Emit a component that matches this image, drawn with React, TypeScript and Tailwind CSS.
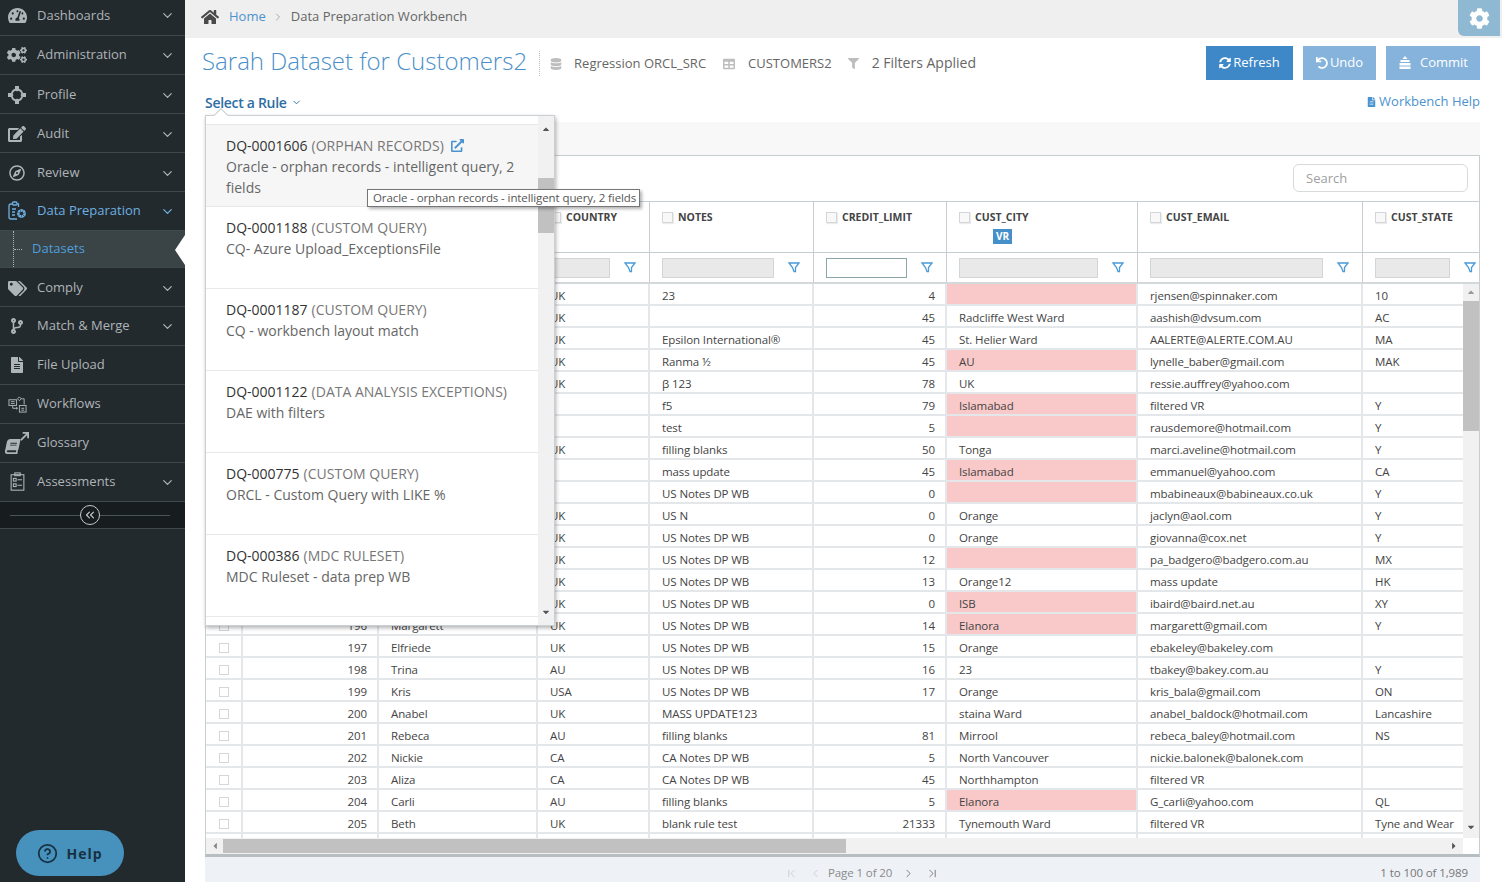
import React from "react";
import { ChevronDown, ChevronRight, ChevronLeft, ChevronFirst, ChevronLast, CircleHelp, ChevronsLeft } from "lucide-react";
import {
  FaTachometerAlt, FaCogs, FaEdit, FaRegCompass, FaTags, FaCodeBranch, FaFileAlt, FaHome, FaDatabase,
  FaTable, FaFilter, FaSyncAlt, FaUndo, FaCog, FaExternalLinkAlt, FaCaretUp, FaCaretDown, FaCaretLeft, FaCaretRight, FaBook,
} from "react-icons/fa";

const ProfileIcon = () => (
  <svg viewBox="0 0 20 20" className="h-[20px] w-[20px]" fill="none" stroke="currentColor">
    <path d="M10 4.500a5.500 5.500 0 1 0 .01 0z" strokeWidth="1.800" />
    <path d="M8 1h4v4l-2 1.500L8 5zM8 19h4v-4l-2-1.500L8 15zM1 8v4h4l1.500-2L5 8zM19 8v4h-4l-1.500-2L15 8z" fill="currentColor" strokeWidth="0" />
  </svg>
);
const DataPrepIcon = () => (
  <svg viewBox="0 0 20 20" className="h-[20px] w-[20px]" fill="none" stroke="currentColor" strokeWidth="1.3">
    <path d="M4 3h1.500M10 3h1.500v3M4 3q-2 0-2 2v11q0 2 2 2h6" />
    <rect x="5.500" y="1" width="4.500" height="3" rx="1" />
    <path d="M5 8h4M5 11h3M5 14h3" />
    <circle cx="14.500" cy="12.500" r="3" strokeWidth="2.600" strokeDasharray="2 0.600" />
    <circle cx="14.500" cy="12.500" r="3.800" strokeWidth="0.800" />
  </svg>
);
const WorkflowIcon = () => (
  <svg viewBox="0 0 20 20" className="h-[19px] w-[19px]" fill="none" stroke="currentColor" strokeWidth="1">
    <rect x="1" y="5" width="8" height="6" />
    <path d="M3 7h4M3 9h4M5 11v3h5M10 14l-1.500-1M10 14l-1.500 1" />
    <path d="M12 2l2 2-2 2-2-2z" />
    <path d="M14 4h3v6" />
    <rect x="12" y="11" width="7" height="7" />
    <path d="M14 14h3M14 16h3" />
  </svg>
);
const GlossaryIcon = () => (
  <span className="relative block h-[22px] w-[24px]">
    <FaBook className="absolute bottom-0 left-0 h-[15px] w-[15px] -skew-x-12" />
    <svg viewBox="0 0 10 10" className="absolute right-0 top-0 h-[9px] w-[9px]" fill="none" stroke="currentColor" strokeWidth="2">
      <path d="M1 9l7-7M3 1h6v6" />
    </svg>
  </span>
);
const AssessIcon = () => (
  <svg viewBox="0 0 18 22" className="h-[20px] w-[17px]" fill="none" stroke="currentColor" strokeWidth="1.200">
    <rect x="2" y="3" width="14" height="17" />
    <rect x="6" y="1" width="6" height="3" />
    <rect x="4.500" y="7" width="3" height="3" />
    <rect x="4.500" y="13" width="3" height="3" />
    <path d="M9 8.500h5M9 14.500h5" />
  </svg>
);
const CommitIcon = () => (
  <svg viewBox="0 0 14 14" className="h-[14px] w-[14px]" fill="currentColor">
    <path d="M7 0l2.500 3h-5zM2.500 4h9v2h-9zM1.500 7h11v2.500h-11zM1.500 10.500h11V13h-11z" />
  </svg>
);
const FunnelIcon = () => (
  <svg viewBox="0 0 12 11" className="h-[11px] w-[12px] shrink-0" fill="none" stroke="#4a9bd8" strokeWidth="1.300">
    <path d="M1 1h10L7.500 5.500v4L6 9.500 4.500 5.500z" />
  </svg>
);

type NavItem = { label: string; icon: React.ReactNode; chevron?: boolean; active?: boolean; nudge?: boolean };
const nav1: NavItem[] = [
  { label: "Administration", icon: <FaCogs className="h-[20px] w-[20px]" />, chevron: true },
  { label: "Profile", icon: <ProfileIcon />, chevron: true, nudge: true },
  { label: "Audit", icon: <FaEdit className="h-[18px] w-[18px]" />, chevron: true, nudge: true },
  { label: "Review", icon: <FaRegCompass className="h-[16px] w-[16px]" />, chevron: true, nudge: true },
  { label: "Data Preparation", icon: <DataPrepIcon />, chevron: true, active: true },
];
const nav2: NavItem[] = [
  { label: "Comply", icon: <FaTags className="h-[19px] w-[19px]" />, chevron: true, nudge: true },
  { label: "Match & Merge", icon: <FaCodeBranch className="h-[16px] w-[16px]" />, chevron: true },
  { label: "File Upload", icon: <FaFileAlt className="h-[16px] w-[14px]" /> },
  { label: "Workflows", icon: <WorkflowIcon /> },
  { label: "Glossary", icon: <GlossaryIcon /> },
  { label: "Assessments", icon: <AssessIcon />, chevron: true },
];

function NavRow({ item, h = "h-[39px]", extra = "" }: { item: NavItem; h?: string; extra?: string }) {
  return (
    <div className={`flex ${h} ${extra} items-center border-b border-[#3e494e] pl-[5px] pr-[10px] text-[13px] ${item.nudge ? "pt-[2px]" : ""} ${item.active ? "text-[#6db0e0]" : "text-[#aeb4b8]"}`}>
      <span className="flex w-[32px] shrink-0 items-center justify-center pr-[8px]">{item.icon}</span>
      <span className="flex-1">{item.label}</span>
      {item.chevron && <ChevronDown className="h-[15px] w-[15px]" strokeWidth={2} />}
    </div>
  );
}

type Row = { id?: number; name?: string; c: string; n: string; l: string; city: string; pink?: boolean; e: string; s: string };
const rows: Row[] = [
  { c: "UK", n: "23", l: "4", city: "", pink: true, e: "rjensen@spinnaker.com", s: "10" },
  { c: "UK", n: "", l: "45", city: "Radcliffe West Ward", e: "aashish@dvsum.com", s: "AC" },
  { c: "UK", n: "Epsilon International®", l: "45", city: "St. Helier Ward", e: "AALERTE@ALERTE.COM.AU", s: "MA" },
  { c: "UK", n: "Ranma ½", l: "45", city: "AU", pink: true, e: "lynelle_baber@gmail.com", s: "MAK" },
  { c: "UK", n: "β 123", l: "78", city: "UK", e: "ressie.auffrey@yahoo.com", s: "" },
  { c: "", n: "f5", l: "79", city: "Islamabad", pink: true, e: "filtered VR", s: "Y" },
  { c: "", n: "test", l: "5", city: "", pink: true, e: "rausdemore@hotmail.com", s: "Y" },
  { c: "UK", n: "filling blanks", l: "50", city: "Tonga", e: "marci.aveline@hotmail.com", s: "Y" },
  { c: "", n: "mass update", l: "45", city: "Islamabad", pink: true, e: "emmanuel@yahoo.com", s: "CA" },
  { c: "", n: "US Notes DP WB", l: "0", city: "", pink: true, e: "mbabineaux@babineaux.co.uk", s: "Y" },
  { c: "UK", n: "US N", l: "0", city: "Orange", e: "jaclyn@aol.com", s: "Y" },
  { c: "UK", n: "US Notes DP WB", l: "0", city: "Orange", e: "giovanna@cox.net", s: "Y" },
  { c: "UK", n: "US Notes DP WB", l: "12", city: "", pink: true, e: "pa_badgero@badgero.com.au", s: "MX" },
  { c: "UK", n: "US Notes DP WB", l: "13", city: "Orange12", e: "mass update", s: "HK" },
  { c: "UK", n: "US Notes DP WB", l: "0", city: "ISB", pink: true, e: "ibaird@baird.net.au", s: "XY" },
  { id: 196, name: "Margarett", c: "UK", n: "US Notes DP WB", l: "14", city: "Elanora", pink: true, e: "margarett@gmail.com", s: "Y" },
  { id: 197, name: "Elfriede", c: "UK", n: "US Notes DP WB", l: "15", city: "Orange", e: "ebakeley@bakeley.com", s: "" },
  { id: 198, name: "Trina", c: "AU", n: "US Notes DP WB", l: "16", city: "23", e: "tbakey@bakey.com.au", s: "Y" },
  { id: 199, name: "Kris", c: "USA", n: "US Notes DP WB", l: "17", city: "Orange", e: "kris_bala@gmail.com", s: "ON" },
  { id: 200, name: "Anabel", c: "UK", n: "MASS UPDATE123", l: "", city: "staina Ward", e: "anabel_baldock@hotmail.com", s: "Lancashire" },
  { id: 201, name: "Rebeca", c: "AU", n: "filling blanks", l: "81", city: "Mirrool", e: "rebeca_baley@hotmail.com", s: "NS" },
  { id: 202, name: "Nickie", c: "CA", n: "CA Notes DP WB", l: "5", city: "North Vancouver", e: "nickie.balonek@balonek.com", s: "" },
  { id: 203, name: "Aliza", c: "CA", n: "CA Notes DP WB", l: "45", city: "Northhampton", e: "filtered VR", s: "" },
  { id: 204, name: "Carli", c: "AU", n: "filling blanks", l: "5", city: "Elanora", pink: true, e: "G_carli@yahoo.com", s: "QL" },
  { id: 205, name: "Beth", c: "UK", n: "blank rule test", l: "21333", city: "Tynemouth Ward", e: "filtered VR", s: "Tyne and Wear" },
  { c: "", n: "", l: "", city: "", e: "", s: "" },
];

const Check = () => <span className="inline-block h-[11px] w-[11px] shrink-0 border border-[#d4d7d9] bg-[#f8f8f8] shadow-[1px_1px_1px_rgba(0,0,0,0.08)]" />;

const cell = "flex h-full shrink-0 items-center border-r-2 border-[#e4e7ea] pt-[3px] whitespace-nowrap overflow-hidden";

const rules = [
  ["DQ-0001606", "(ORPHAN RECORDS)", "Oracle - orphan records - intelligent query, 2 fields"],
  ["DQ-0001188", "(CUSTOM QUERY)", "CQ- Azure Upload_ExceptionsFile"],
  ["DQ-0001187", "(CUSTOM QUERY)", "CQ - workbench layout match"],
  ["DQ-0001122", "(DATA ANALYSIS EXCEPTIONS)", "DAE with filters"],
  ["DQ-000775", "(CUSTOM QUERY)", "ORCL - Custom Query with LIKE %"],
  ["DQ-000386", "(MDC RULESET)", "MDC Ruleset - data prep WB"],
];

const headerCols = [
  { w: "w-[112px]", label: "COUNTRY", input: "w-[60px]" },
  { w: "w-[164px]", label: "NOTES", input: "w-[112px]" },
  { w: "w-[133px]", label: "CREDIT_LIMIT", input: "w-[81px]", white: true },
  { w: "w-[191px]", label: "CUST_CITY", input: "w-[139px]", vr: true },
  { w: "w-[225px]", label: "CUST_EMAIL", input: "w-[173px]" },
  { w: "w-[117px]", label: "CUST_STATE", input: "w-[75px]" },
];

export default function App() {
  return (
    <div className="flex h-[882px] w-[1502px] overflow-hidden bg-white font-['Open_Sans',sans-serif] text-[12px] text-[#444]">
      <aside className="relative flex h-full w-[185px] shrink-0 flex-col bg-[#232a2e]">
        <NavRow h="h-[36px]" extra="pb-[4px]" item={{ label: "Dashboards", icon: <FaTachometerAlt className="h-[19px] w-[19px]" />, chevron: true }} />
        {nav1.map((i) => <NavRow key={i.label} item={i} />)}
        <div className="relative flex h-[37px] items-center border-b border-[#3e494e] bg-[#3a4345] pl-[32px] text-[13px] text-[#4f9fdc]">
          <span className="absolute bottom-0 left-[13px] top-0 border-l border-dotted border-[#aeb4b8]" />
          <span className="absolute left-[14px] top-[18px] w-[8px] border-t border-dotted border-[#aeb4b8]" />
          Datasets
          <svg viewBox="0 0 10 30" className="absolute right-0 top-[4px] h-[30px] w-[10px]" fill="#fff"><path d="M10 0v30L0 15z" /></svg>
        </div>
        {nav2.map((i) => <NavRow key={i.label} item={i} />)}
        <div className="relative flex h-[27px] items-center justify-center border-b border-[#3e494e] bg-[#171c1f]">
          <span className="absolute left-[10px] right-[15px] top-[13px] border-t border-[#4a555a]" />
          <span className="relative mr-[5px] flex h-[20px] w-[20px] items-center justify-center rounded-full border border-[#c4c9cb] bg-[#171c1f] text-[#c4c9cb]">
            <ChevronsLeft className="h-[14px] w-[14px]" />
          </span>
        </div>
        <div className="absolute bottom-[6px] left-[16px] flex h-[46px] w-[108px] items-center justify-center gap-[8px] rounded-[23px] bg-[#4791bd] text-[14px] font-bold tracking-[1px] text-[#17303f]">
          <CircleHelp className="h-[21px] w-[21px]" strokeWidth={2} />
          Help
        </div>
      </aside>

      <main className="relative flex min-w-0 flex-1 flex-col">
        <div className="relative flex h-[38px] shrink-0 items-center bg-[#efefef] pb-[4px] pl-[16px] text-[13px]">
          <FaHome className="h-[18px] w-[18px] text-[#4a4a4a]" />
          <span className="ml-[10px] text-[#4b93cf]">Home</span>
          <ChevronRight className="mx-[6px] h-[12px] w-[12px] text-[#aaa]" />
          <span className="ml-[1px] text-[#666]">Data Preparation Workbench</span>
          <div className="absolute right-[2px] top-0 flex h-[36px] w-[42px] items-center justify-center rounded-bl-[6px] bg-[#8fb8d3] text-white">
            <FaCog className="h-[21px] w-[21px]" />
          </div>
        </div>

        <div className="h-[84px] shrink-0 pl-[17px] pr-[22px]">
          <div className="flex h-[50px] items-start">
            <h1 className="mt-[5px] whitespace-nowrap text-[24px] font-light leading-[36px] text-[#4b8fc9]">Sarah Dataset for Customers2</h1>
            <div className="ml-[12px] mt-[13px] flex h-[25px] items-center border-l border-dotted border-[#bbb] pl-[10px] text-[13px] text-[#666]">
              <FaDatabase className="h-[12px] w-[12px] text-[#bdbdbd]" />
              <span className="ml-[12px]">Regression ORCL_SRC</span>
              <FaTable className="ml-[17px] h-[12px] w-[12px] text-[#bdbdbd]" />
              <span className="ml-[13px]">CUSTOMERS2</span>
              <FaFilter className="ml-[16px] h-[11px] w-[11px] text-[#bdbdbd]" />
              <span className="ml-[13px] -translate-y-[1px] text-[14px]">2 Filters Applied</span>
            </div>
            <div className="ml-auto mt-[8px] flex gap-[10px] text-[13px] text-white">
              <div className="flex h-[34px] w-[87px] items-center justify-center gap-[2px] bg-[#3f88c8]"><FaSyncAlt className="h-[12px] w-[12px]" />Refresh</div>
              <div className="flex h-[34px] w-[73px] items-center justify-center gap-[2px] bg-[#85b3dc]"><FaUndo className="h-[12px] w-[12px]" />Undo</div>
              <div className="flex h-[34px] w-[94px] items-center justify-center gap-[8px] bg-[#85b3dc]"><CommitIcon />Commit</div>
            </div>
          </div>
          <div className="flex items-center justify-between">
            <div className="ml-[3px] mt-[4px] flex items-center gap-[4px] text-[14px] font-semibold tracking-[-0.3px] text-[#2f6da3]">
              Select a Rule <ChevronDown className="h-[11px] w-[11px]" />
            </div>
            <div className="mt-[2px] flex items-center gap-[3px] text-[13px] text-[#4b93cf]">
              <FaFileAlt className="h-[10px] w-[9px]" /> Workbench Help
            </div>
          </div>
        </div>

        <div className="ml-[20px] mr-[22px] h-[33px] shrink-0 bg-[#f8f8f8]" />

        <div className="ml-[20px] mr-[22px] flex h-[702px] shrink-0 flex-col border border-b-[3px] border-[#c7ced2] border-b-[#b6bec2]">
          <div className="flex h-[46px] shrink-0 items-center justify-end border-b border-[#c7ced2] pb-[1px] pr-[11px]">
            <div className="flex h-[28px] w-[175px] items-center rounded-[6px] border border-[#d6dadc] pl-[12px] pt-[1px] text-[13px] text-[#a0a0a0]">Search</div>
          </div>
          <div className="flex h-[51px] shrink-0 border-b border-[#c7ced2]">
            <div className="h-full w-[37px] shrink-0 border-r border-[#c7ced2]" />
            <div className="h-full w-[136px] shrink-0 border-r border-[#c7ced2]" />
            <div className="h-full w-[159px] shrink-0 border-r border-[#c7ced2]" />
            {headerCols.map((c) => (
              <div key={c.label} className={`${c.w} h-full shrink-0 border-r border-[#c7ced2] pl-[12px] pt-[8px] last:border-r-0`}>
                <div className="flex items-center gap-[5px] text-[10.500px] font-bold leading-[14px] text-[#444]"><Check />{c.label}</div>
                {c.vr && <div className="ml-[34px] mt-[5px] flex h-[15px] w-[19px] items-center justify-center bg-[#4590c9] text-[10px] font-bold text-white">VR</div>}
              </div>
            ))}
          </div>
          <div className="flex h-[31px] shrink-0 border-b-2 border-[#d3d8db]">
            <div className="h-full w-[37px] shrink-0 border-r border-[#c7ced2]" />
            <div className="h-full w-[136px] shrink-0 border-r border-[#c7ced2]" />
            <div className="h-full w-[159px] shrink-0 border-r border-[#c7ced2]" />
            {headerCols.map((c) => (
              <div key={c.label} className={`${c.w} flex h-full shrink-0 items-center border-r border-[#c7ced2] pl-[12px] last:border-r-0`}>
                <span className={`${c.input} h-[20px] shrink-0 border ${c.white ? "border-[#8aa5aa] bg-white" : "border-[#d2d6d6] bg-[#e9e9e9]"}`} />
                <span className="ml-[14px]"><FunnelIcon /></span>
              </div>
            ))}
          </div>

          <div className="flex h-[554px] shrink-0">
            <div className="min-w-0 flex-1 overflow-hidden">
              {rows.map((r, i) => (
                <div key={i} className="flex h-[22px] w-[1274px] border-b-2 border-[#e4e7ea] text-[11.500px] leading-none tracking-[-0.1px]">
                  <div className={`${cell} w-[37px] justify-center`}>{r.id && <span className="h-[10px] w-[10px] border border-[#d4d7d9]" />}</div>
                  <div className={`${cell} w-[136px] justify-end pr-[10px]`}>{r.id}</div>
                  <div className={`${cell} w-[159px] pl-[12px]`}>{r.name}</div>
                  <div className={`${cell} w-[112px] pl-[12px]`}>{r.c}</div>
                  <div className={`${cell} w-[164px] pl-[12px]`}>{r.n}</div>
                  <div className={`${cell} w-[133px] justify-end pr-[10px]`}>{r.l}</div>
                  <div className={`${cell} w-[191px] pl-[12px] ${r.pink ? "bg-[#f9c9c9]" : ""}`}>{r.city}</div>
                  <div className={`${cell} w-[225px] pl-[12px]`}>{r.e}</div>
                  <div className={`${cell} w-[117px] border-r-0 pl-[12px]`}>{r.s}</div>
                </div>
              ))}
            </div>
            <div className="flex w-[16px] shrink-0 flex-col items-center bg-[#f1f1f1] text-[#9a9a9a]">
              <FaCaretUp className="mt-[3px] h-[10px] w-[10px]" />
              <div className="mt-[4px] h-[130px] w-full bg-[#c1c1c1]" />
              <FaCaretDown className="mb-[6px] mt-auto h-[10px] w-[10px] text-[#555]" />
            </div>
          </div>

          <div className="flex h-[16px] shrink-0 items-center">
            <div className="flex h-full w-[1257px] items-center bg-[#f1f1f1] text-[#888]">
              <FaCaretLeft className="ml-[4px] h-[10px] w-[10px]" />
              <div className="ml-[3px] h-[14px] w-[623px] bg-[#c1c1c1]" />
              <FaCaretRight className="ml-auto mr-[4px] h-[10px] w-[10px] text-[#555]" />
            </div>
          </div>
        </div>

        <div className="relative ml-[20px] mr-[22px] flex h-[25px] flex-1 items-center bg-[#eef1f6] pl-[580px] pt-[7px] text-[11.500px] tracking-[-0.1px] text-[#8a8a8a]">
          <ChevronFirst className="h-[13px] w-[13px] text-[#c4c8cc]" strokeWidth={1.5} />
          <ChevronLeft className="ml-[11px] h-[13px] w-[13px] text-[#c4c8cc]" strokeWidth={1.5} />
          <span className="ml-[6px]">Page 1 of 20</span>
          <ChevronRight className="ml-[10px] h-[13px] w-[13px] text-[#666]" strokeWidth={1.5} />
          <ChevronLast className="ml-[11px] h-[13px] w-[13px] text-[#666]" strokeWidth={1.5} />
          <span className="absolute right-[12px] text-[#777]">1 to 100 of 1,989</span>
        </div>

        {/* Select-a-rule popover */}
        <div className="absolute left-[20px] top-[115px] h-[511px] w-[350px] border border-[#c9cfd2] bg-white shadow-[1px_2px_4px_rgba(0,0,0,0.3)]">
          <span className="absolute -top-[6px] left-[10px] h-[10px] w-[10px] rotate-45 border-l border-t border-[#c9cfd2] bg-white" />
          <div className="flex h-full pt-[8px]">
            <div className="min-w-0 flex-1 overflow-hidden border-t border-[#e8e8e8]">
              {rules.map((r, i) => (
                <div key={r[0]} className={`h-[82px] border-b border-[#e8e8e8] pl-[20px] pr-[16px] pt-[10px] text-[14px] leading-[21px] ${i === 0 ? "bg-[#f6f6f6]" : ""}`}>
                  <div className="flex items-center text-[#777]">
                    <span className="text-[#333]">{r[0]}</span>
                    <span className="ml-[4px]">{r[1]}</span>
                    {i === 0 && <FaExternalLinkAlt className="ml-[7px] h-[13px] w-[13px] text-[#4b93cf]" />}
                  </div>
                  <div className="text-[#666]">{r[2]}</div>
                </div>
              ))}
            </div>
            <div className="relative -mt-[8px] flex w-[16px] shrink-0 flex-col items-center bg-[#f1f1f1] pt-[8px] text-[#555]">
              <FaCaretUp className="h-[10px] w-[10px]" />
              <div className="mt-[44px] h-[55px] w-full bg-[#c1c1c1]" />
              <FaCaretDown className="mb-[8px] mt-auto h-[10px] w-[10px]" />
            </div>
          </div>
        </div>

        {/* Native title tooltip */}
        <div className="absolute left-[182px] top-[189px] flex h-[18px] w-[273px] items-center whitespace-nowrap border border-[#767676] bg-white pl-[5px] text-[11.500px] tracking-[-0.1px] text-[#555] shadow-[2px_2px_3px_rgba(0,0,0,0.3)]">
          Oracle - orphan records - intelligent query, 2 fields
        </div>
      </main>
    </div>
  );
}
